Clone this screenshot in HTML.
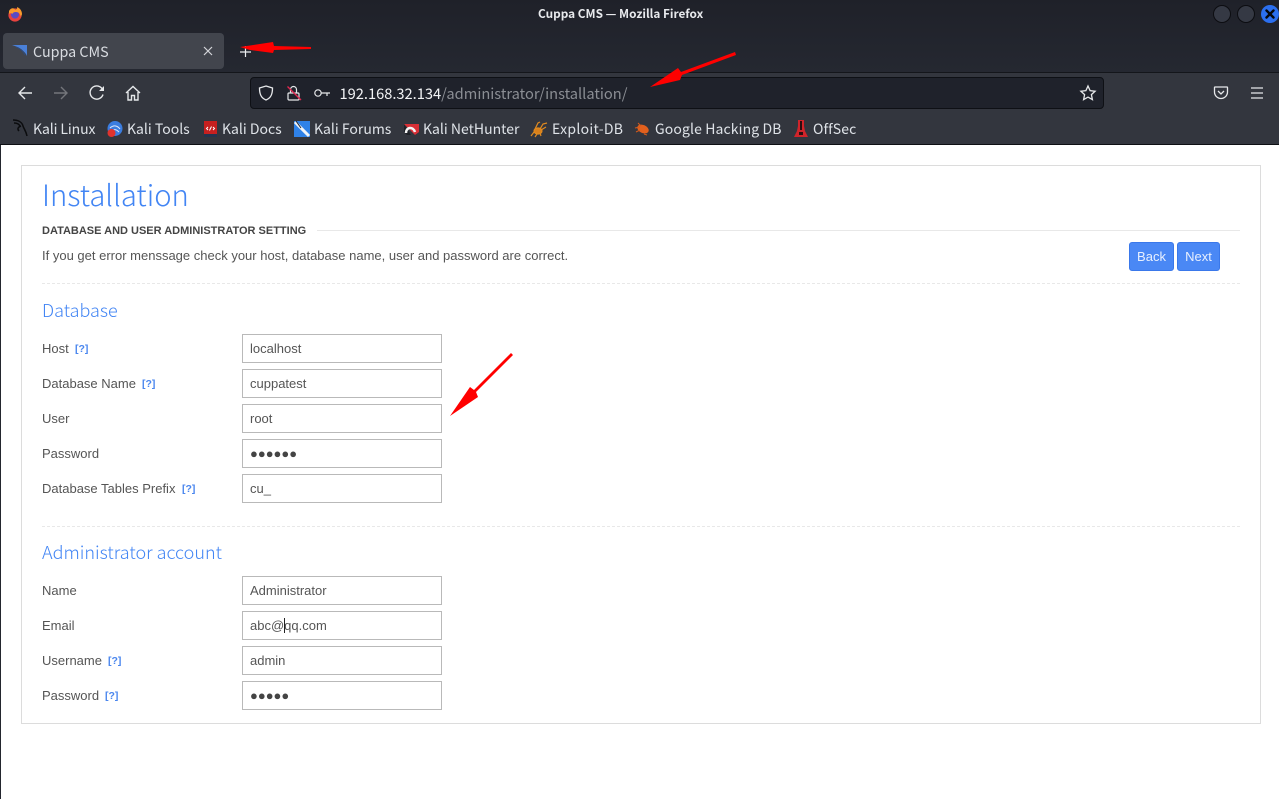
<!DOCTYPE html>
<html><head><meta charset="utf-8"><title>Cuppa CMS — Mozilla Firefox</title>
<style>
html,body{margin:0;padding:0;width:1279px;height:799px;overflow:hidden;background:#fff}
*{box-sizing:border-box}
.a{position:absolute;white-space:nowrap}
.c{font-family:"Noto Sans CJK SC","DejaVu Sans",sans-serif;color:#e3e5e8}
.p{font-family:"Liberation Sans",sans-serif;font-size:13px;color:#555;line-height:16px}
.h{font-family:"Noto Sans CJK SC","Liberation Sans",sans-serif;font-weight:300;color:#4285f4}
.q{font-family:"Liberation Sans",sans-serif;font-size:10.5px;font-weight:bold;color:#4a86ee;line-height:16px}
.i{position:absolute;left:242px;width:200px;height:29px;border:1px solid #b9b9b9;background:#fff;font-family:"Liberation Sans",sans-serif;font-size:13px;color:#555;padding-left:7px;line-height:27px}
.b{position:absolute;top:242px;height:29px;background:#4a88f5;border:1px solid #3a78ea;border-radius:3px;color:#e8f0fe;font-family:"Liberation Sans",sans-serif;font-size:13px;line-height:27px;text-align:center}
.bm{font-size:14px;line-height:20px;top:119px;color:#dfe3e8}
svg{position:absolute;overflow:visible}
.d{position:absolute;left:42px;width:1198px;height:0;border-top:1px dashed #e8e8e8}
.dots{font-size:13px}
</style></head>
<body>
<!-- title + tab bar -->
<div class="a" style="left:0;top:0;width:1279px;height:72px;background:linear-gradient(#1f2129,#252831)"></div>
<div class="a" style="left:0;top:72px;width:1279px;height:1px;background:#14161b"></div>
<div class="a" style="left:0;top:73px;width:1279px;height:71px;background:#33363e"></div>
<div class="a" style="left:0;top:144px;width:1279px;height:1px;background:#0e1014"></div>
<div class="a" style="left:0;top:145px;width:1px;height:654px;background:#23262e"></div>

<!-- firefox logo -->
<svg style="left:7px;top:6px" width="16" height="16" viewBox="0 0 16 16">
<circle cx="8" cy="9" r="6.6" fill="#e8433f"/><circle cx="8" cy="8.6" r="4" fill="#5b4bc4"/>
<path d="M2 5C4 1 8 2 8 4c3-1 2-3 2-3 3 1 5 4 5 7 0 1-1 2-1 3-1-3-2-5-5-5-2 0-4 1-3 2-2-1-3-1-4 0z" fill="#fa9a2c"/>
</svg>
<div class="a" style="left:538px;top:7px;font:bold 11.8px/14px 'Noto Sans CJK SC','DejaVu Sans',sans-serif;color:#e8eaed">Cuppa CMS — Mozilla Firefox</div>
<div class="a" style="left:1213px;top:5px;width:18px;height:18px;border-radius:50%;background:#353944;border:1px solid #0c0d11"></div>
<div class="a" style="left:1237px;top:5px;width:18px;height:18px;border-radius:50%;background:#353944;border:1px solid #0c0d11"></div>
<div class="a" style="left:1261px;top:5px;width:18px;height:18px;border-radius:50%;background:#2b6fef"></div>
<svg style="left:1261px;top:5px" width="18" height="18"><path d="M5.5 5.5l7 7M12.5 5.5l-7 7" stroke="#05070c" stroke-width="2.4" stroke-linecap="round"/></svg>

<!-- tab -->
<div class="a" style="left:3px;top:33px;width:221px;height:36px;border-radius:4px;background:#42454d"></div>
<svg style="left:12px;top:45px" width="16" height="12" viewBox="0 0 16 12">
<path d="M0 0H15V11C13 6 7 2 0 0z" fill="#4a80d8"/><path d="M4 2C8 3 11 6 13 10" stroke="#2f4a78" stroke-width="1" fill="none"/></svg>
<div class="a c" style="left:33px;top:42px;font-size:14.3px;line-height:20px;color:#d9dce1">Cuppa CMS</div>
<svg style="left:203px;top:46px" width="10" height="10"><path d="M1 1l8 8M9 1l-8 8" stroke="#d4d6da" stroke-width="1.2"/></svg>
<svg style="left:240px;top:46px" width="12" height="12"><path d="M0 6h11M5.500 0v11" stroke="#eceef0" stroke-width="1.2"/></svg>

<!-- toolbar icons -->
<svg style="left:17px;top:85px" width="16" height="16" fill="none" stroke="#e6e8ea" stroke-width="1.4"><path d="M15 8H2M8 2L2 8l6 6"/></svg>
<svg style="left:53px;top:85px" width="16" height="16" fill="none" stroke="#74767b" stroke-width="1.4"><path d="M1 8h13M8 2l6 6-6 6"/></svg>
<svg style="left:89px;top:85px" width="16" height="16" fill="none" stroke="#e6e8ea" stroke-width="1.4"><path d="M14 9.500A6.600 6.600 0 1 1 12.500 3L14.600 5"/><path d="M15 1v5h-5" fill="#e6e8ea" stroke="none"/></svg>
<svg style="left:125px;top:85px" width="16" height="16" fill="none" stroke="#e6e8ea" stroke-width="1.4"><path d="M1 8l7-6.500L15 8M3 7v8h3.500v-4.500h3V15H13V7"/></svg>

<!-- url bar -->
<div class="a" style="left:250px;top:77px;width:854px;height:32px;border-radius:4px;background:#1f222b;border:1px solid #0e1015"></div>
<svg style="left:258px;top:85px" width="16" height="16" fill="none" stroke="#e6e8ea" stroke-width="1.3"><path d="M8 1l6.500 2c0 6-1.500 10-6.500 12C3 13 1.500 9 1.500 3z"/></svg>
<svg style="left:287px;top:85px" width="15" height="16" fill="none" stroke="#e6e8ea" stroke-width="1.2"><rect x="1" y="8" width="11" height="7" rx="1"/><path d="M3.500 8V4.500a3 3 0 0 1 6 0V8"/><path d="M0.500 1.500L14 15" stroke="#e22850" stroke-width="1.3"/></svg>
<svg style="left:314px;top:88px" width="16" height="10" fill="none" stroke="#e6e8ea" stroke-width="1.2"><circle cx="4" cy="5" r="3.200"/><path d="M7 5h9M13 5v3"/></svg>
<div class="a c" style="left:339.500px;top:84px;font-size:14.65px;line-height:20px;color:#f2f3f5">192.168.32.134<span style="color:#8b8e94">/administrator/installation/</span></div>
<svg style="left:1080px;top:85px" width="16" height="16" fill="none" stroke="#e6e8ea" stroke-width="1.300"><path d="M8 1l2.100 4.600 5 .6-3.700 3.400 1 5L8 12.100 3.600 14.600l1-5L.900 6.200l5-.6z"/></svg>
<svg style="left:1214px;top:86px" width="14" height="14" fill="none" stroke="#e6e8ea" stroke-width="1.300"><path d="M1 1h12a.500.500 0 0 1 .500.500V6A6.500 6.500 0 0 1 .500 6V1.500A.500.500 0 0 1 1 1z"/><path d="M4 5l3 3 3-3"/></svg>
<svg style="left:1251px;top:87px" width="12" height="12" stroke="#e6e8ea" stroke-width="1.200"><path d="M0 1h12M0 6h12M0 11h12"/></svg>

<!-- bookmarks -->
<svg style="left:12px;top:119px" width="18" height="18" fill="none" stroke="#0b0c0e" stroke-width="1.500"><path d="M1 1c5 0 9 2 10 6 1 3 3 5 4 10M2 4c3 0 5 1 6 3M9 7C6 8 5 10 7 12"/></svg>
<div class="a c bm" style="left:33px;letter-spacing:-.1px">Kali Linux</div>
<svg style="left:107px;top:121px" width="16" height="16"><circle cx="8" cy="7.500" r="7.500" fill="#3b7de0"/><path d="M3 7c3-3 7-3 10 1M5 10c2-2 4-2 7 1" stroke="#dce8fb" fill="none"/><circle cx="4.500" cy="12" r="4" fill="#e0332e"/></svg>
<div class="a c bm" style="left:127px">Kali Tools</div>
<svg style="left:204px;top:121px" width="13" height="16"><rect x="0" y="0" width="13" height="15" fill="#c7201f"/><rect x="0" y="13" width="13" height="3" fill="#24344f"/><path d="M4 6L2.500 7.500 4 9M9 6l1.500 1.500L9 9M7.500 5.500l-2 4" stroke="#fff" fill="none"/></svg>
<div class="a c bm" style="left:222px">Kali Docs</div>
<svg style="left:294px;top:121px" width="16" height="16"><rect width="16" height="16" fill="#2f82e8"/><path d="M1 1l14 14" stroke="#f2f5f8" stroke-width="3"/><path d="M2 0l5 7" stroke="#1f2430" stroke-width="1"/></svg>
<div class="a c bm" style="left:314px">Kali Forums</div>
<svg style="left:403px;top:122px" width="16" height="14"><path d="M1 2h15v8l-4 3z" fill="#d92f36"/><path d="M1 2v8l3 3h4z" fill="#1e2127"/><path d="M3 11C3 5 10 4 12 10" stroke="#f4f4f4" stroke-width="2.500" fill="none"/></svg>
<div class="a c bm" style="left:423px">Kali NetHunter</div>
<svg style="left:531px;top:121px" width="17" height="16" fill="none" stroke="#e08a1f" stroke-width="1.200"><ellipse cx="7" cy="10" rx="4" ry="3" fill="#d9801b"/><path d="M9 8l3-5 4-1M10 9l5-3M4 8L7 2l2-1M3 11l-3 4M6 13l-2 3M9 12l1 3"/></svg>
<div class="a c bm" style="left:552px;letter-spacing:.3px">Exploit-DB</div>
<svg style="left:635px;top:122px" width="15" height="14"><ellipse cx="8" cy="7" rx="6" ry="4" fill="#e2601d" transform="rotate(25 8 7)"/><path d="M0 6l5-1M3 1l3 3M1 10l4-2M9 12l3 1" stroke="#d35a1c" fill="none"/></svg>
<div class="a c bm" style="left:655px;letter-spacing:.12px">Google Hacking DB</div>
<svg style="left:794px;top:120px" width="14" height="18"><path d="M4 0h6v6l1 5 3 6H0l3-6 1-5z" fill="#d0242a"/><path d="M6 1h2v9H6zM5 12h4v3H5z" fill="#2a0e10"/></svg>
<div class="a c bm" style="left:813px;letter-spacing:.1px">OffSec</div>

<!-- panel -->
<div class="a" style="left:21px;top:165px;width:1240px;height:559px;border:1px solid #dcdcdc;background:#fff"></div>
<div class="a h" style="left:42px;top:174px;font-size:29.2px;line-height:40px">Installation</div>
<div class="a" style="left:42px;top:224px;font:bold 11px/15px 'Liberation Sans',sans-serif;color:#444">DATABASE AND USER ADMINISTRATOR SETTING</div>
<div class="a" style="left:317px;top:230px;width:923px;height:1px;background:#e8e8e8"></div>
<div class="a p" style="left:42px;top:248px">If you get error menssage check your host, database name, user and password are correct.</div>
<div class="b" style="left:1129px;width:45px">Back</div>
<div class="b" style="left:1177px;width:43px">Next</div>
<div class="d" style="top:283px"></div>
<div class="a h" style="left:42px;top:298px;font-size:18px;line-height:25px">Database</div>

<div class="a p" style="left:42px;top:341px">Host</div><div class="a q" style="left:75px;top:341px">[?]</div>
<div class="i" style="top:334px">localhost</div>
<div class="a p" style="left:42px;top:376px">Database Name</div><div class="a q" style="left:142px;top:376px">[?]</div>
<div class="i" style="top:369px">cuppatest</div>
<div class="a p" style="left:42px;top:411px">User</div>
<div class="i" style="top:404px">root</div>
<div class="a p" style="left:42px;top:446px">Password</div>
<div class="i dots" style="top:439px;color:#444">●●●●●●</div>
<div class="a p" style="left:42px;top:481px">Database Tables Prefix</div><div class="a q" style="left:182px;top:481px">[?]</div>
<div class="i" style="top:474px">cu_</div>

<div class="d" style="top:526px"></div>
<div class="a h" style="left:42px;top:540px;font-size:18px;line-height:25px">Administrator account</div>

<div class="a p" style="left:42px;top:583px">Name</div>
<div class="i" style="top:576px">Administrator</div>
<div class="a p" style="left:42px;top:618px">Email</div>
<div class="i" style="top:611px">abc@qq.com</div>
<div class="a" style="left:284px;top:618px;width:1px;height:15px;background:#222"></div>
<div class="a p" style="left:42px;top:653px">Username</div><div class="a q" style="left:108px;top:653px">[?]</div>
<div class="i" style="top:646px">admin</div>
<div class="a p" style="left:42px;top:688px">Password</div><div class="a q" style="left:105px;top:688px">[?]</div>
<div class="i dots" style="top:681px;color:#444">●●●●●</div>

<!-- red arrows -->
<svg style="left:0;top:0" width="1279" height="799">
<path d="M240 47L273 42L274 46L311 47V49L274 50L273 53L250 50Z" fill="#f00"/>
<path d="M735 52L736 55L682 75L680 80L650 87L678 68L681 72Z" fill="#f00"/>
<path d="M511 353L513 355L476 392L478 397L450 416L470 387L474 390Z" fill="#f00"/>
</svg>
</body></html>
